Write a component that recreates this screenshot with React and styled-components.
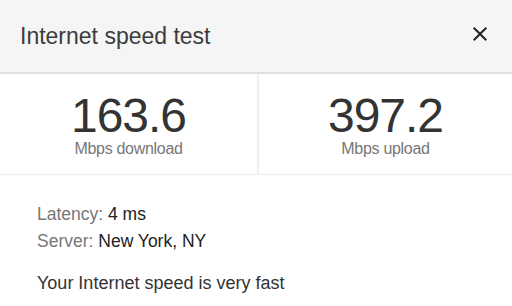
import React from 'react';
import styled, { createGlobalStyle } from 'styled-components';

const GlobalStyle = createGlobalStyle`
  html, body {
    margin: 0;
    padding: 0;
    background: #ffffff;
  }
  body {
    font-family: 'Liberation Sans', Arial, sans-serif;
  }
`;

const Card = styled.div`
  width: 512px;
  height: 306px;
  background: #ffffff;
  overflow: hidden;
`;

const Header = styled.div`
  height: 72px;
  display: flex;
  align-items: center;
  justify-content: space-between;
  padding: 0 20px;
  background: #f5f5f5;
  border-bottom: 2px solid #e0e0e0;
`;

const Title = styled.h1`
  margin: 0;
  font-size: 23px;
  font-weight: 400;
  line-height: 72px;
  color: #3c3c3c;
`;

const CloseButton = styled.button`
  display: flex;
  align-items: center;
  justify-content: center;
  width: 24px;
  height: 24px;
  padding: 0;
  margin-top: -4px;
  border: none;
  background: transparent;
  cursor: pointer;
  svg {
    fill: #222222;
  }
`;

const Stats = styled.div`
  display: grid;
  grid-template-columns: 257px 1fr;
  border-bottom: 1px solid #eeeeee;
`;

const Stat = styled.div`
  display: flex;
  flex-direction: column;
  align-items: center;
  padding: 18px 0 17px;
  border-left: ${(p) => (p.divided ? '2px solid #eeeeee' : 'none')};
`;

const Value = styled.div`
  font-size: 48px;
  line-height: 48px;
  letter-spacing: -1px;
  color: #333333;
`;

const Unit = styled.div`
  margin-top: 1px;
  font-size: 16px;
  line-height: 16px;
  letter-spacing: -0.3px;
  color: #777777;
`;

const Details = styled.div`
  padding: 26px 37px 0;
`;

const InfoLine = styled.div`
  font-size: 17.5px;
  line-height: 27px;
  color: #222222;
  span {
    color: #777777;
  }
`;

const Verdict = styled.p`
  margin: 15px 0 0;
  font-size: 18px;
  line-height: 27px;
  color: #333333;
`;

function CloseIcon() {
  return (
    <svg width="24" height="24" viewBox="0 0 24 24">
      <path d="M19 6.41L17.59 5 12 10.59 6.41 5 5 6.41 10.59 12 5 17.59 6.41 19 12 13.41 17.59 19 19 17.59 13.41 12z" />
    </svg>
  );
}

const results = [
  { value: '163.6', unit: 'Mbps download' },
  { value: '397.2', unit: 'Mbps upload' },
];

export default function App() {
  return (
    <>
      <GlobalStyle />
      <Card>
        <Header>
          <Title>Internet speed test</Title>
          <CloseButton aria-label="Close">
            <CloseIcon />
          </CloseButton>
        </Header>
        <Stats>
          {results.map((r, i) => (
            <Stat key={r.unit} divided={i > 0}>
              <Value>{r.value}</Value>
              <Unit>{r.unit}</Unit>
            </Stat>
          ))}
        </Stats>
        <Details>
          <InfoLine>
            <span>Latency:</span> 4 ms
          </InfoLine>
          <InfoLine>
            <span>Server:</span> New York, NY
          </InfoLine>
          <Verdict>Your Internet speed is very fast</Verdict>
        </Details>
      </Card>
    </>
  );
}
